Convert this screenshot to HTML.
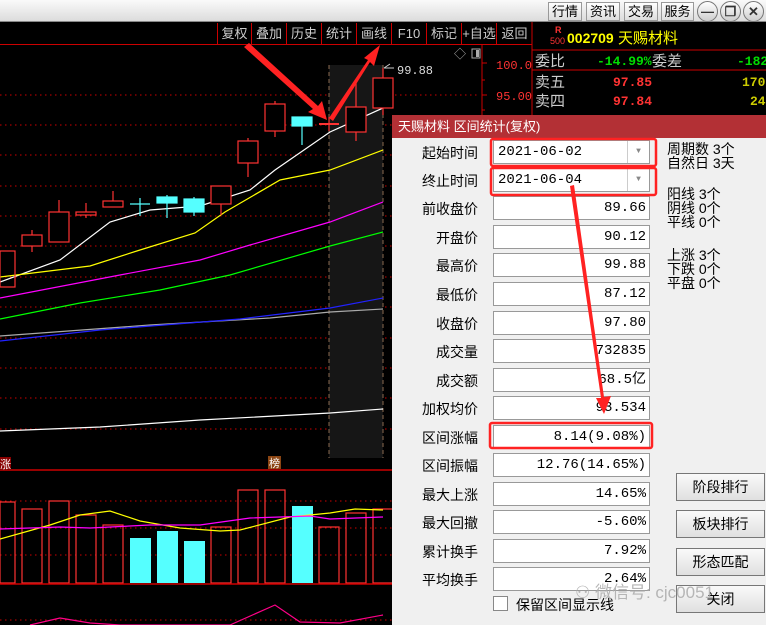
<!DOCTYPE html>
<html><head><meta charset="utf-8"><style>
*{margin:0;padding:0;box-sizing:border-box}
body{width:766px;height:625px;overflow:hidden;background:#000;position:relative;font-family:"Liberation Sans","Noto Sans CJK SC",sans-serif}
.abs{position:absolute}
.top{left:0;top:0;width:766px;height:22px;background:linear-gradient(#fafafa,#dcdcdc);border-bottom:1px solid #888}
.tb{top:2px;height:19px;border:1px solid #999;background:linear-gradient(#fff,#ddd);font-size:13px;color:#000;text-align:center;line-height:17px}
.circ{top:1px;width:21px;height:21px;border-radius:50%;border:1px solid #777;background:linear-gradient(#fff,#ccc);font-size:13px;line-height:19px;text-align:center;color:#333;font-weight:bold}
.tool{top:23px;height:21px;font-size:13px;color:#ccc;line-height:21px;text-align:center;border-left:1px solid #c00}
.dlg{left:392px;top:115px;width:374px;height:510px;background:#f0f0f0}
.dt{left:0;top:0;width:374px;height:23px;background:#b33035;color:#fff;font-size:13px;line-height:23px;padding-left:6px}
.lb{font-size:14px;color:#000;text-align:right;width:86px;left:0}
.in{left:101px;width:157px;height:24px;background:#fff;border:1px solid #999;font-family:"Liberation Mono","Noto Sans CJK SC",monospace;font-size:14px;text-align:right;padding-right:3px;line-height:22px;color:#000}
.btn{left:284px;width:89px;height:28px;border:1px solid #777;background:linear-gradient(#fafafa,#e0e0e0);font-size:14px;text-align:center;line-height:26px}
.side{font-size:14px;color:#000;line-height:14px}
</style></head><body>
<div class="abs top"></div>
<div class="abs tb" style="left:548px;width:34px">行情</div>
<div class="abs tb" style="left:586px;width:34px">资讯</div>
<div class="abs tb" style="left:624px;width:34px">交易</div>
<div class="abs tb" style="left:661px;width:33px">服务</div>
<div class="abs circ" style="left:697px">—</div>
<div class="abs circ" style="left:720px">❐</div>
<div class="abs circ" style="left:743px">✕</div>

<div class="abs" style="left:0;top:44px;width:532px;height:1px;background:#c00"></div>
<div class="abs tool" style="left:217px;width:34px">复权</div>
<div class="abs tool" style="left:251px;width:35px">叠加</div>
<div class="abs tool" style="left:286px;width:35px">历史</div>
<div class="abs tool" style="left:321px;width:35px">统计</div>
<div class="abs tool" style="left:356px;width:35px">画线</div>
<div class="abs tool" style="left:391px;width:35px">F10</div>
<div class="abs tool" style="left:426px;width:35px">标记</div>
<div class="abs tool" style="left:461px;width:35px">+自选</div>
<div class="abs tool" style="left:496px;width:36px">返回</div>

<svg class="abs" style="left:0;top:0" width="766" height="625">
<g stroke="#c00" stroke-dasharray="1.5 3.5" stroke-width="1">
<line x1="0" y1="95" x2="480" y2="95"/><line x1="0" y1="125" x2="480" y2="125"/><line x1="0" y1="155" x2="480" y2="155"/><line x1="0" y1="186" x2="480" y2="186"/><line x1="0" y1="216" x2="480" y2="216"/><line x1="0" y1="246" x2="480" y2="246"/><line x1="0" y1="277" x2="480" y2="277"/><line x1="0" y1="307" x2="480" y2="307"/><line x1="0" y1="338" x2="480" y2="338"/><line x1="0" y1="368" x2="480" y2="368"/><line x1="0" y1="398" x2="480" y2="398"/><line x1="0" y1="429" x2="480" y2="429"/>
<line x1="0" y1="501" x2="480" y2="501"/><line x1="0" y1="528" x2="480" y2="528"/><line x1="0" y1="555" x2="480" y2="555"/><line x1="0" y1="620" x2="480" y2="620"/>
</g>
<rect x="329" y="65" width="54" height="393" fill="#161616"/>
<line x1="329" y1="65" x2="329" y2="458" stroke="#8a6a50" stroke-dasharray="4 3"/>
<line x1="383" y1="65" x2="383" y2="458" stroke="#8a6a50" stroke-dasharray="4 3"/>
<g fill="none" stroke-width="1.2">
<polyline stroke="#fff" points="0,282 60,260 110,222 150,210 200,206 250,190 275,170 330,132 383,108"/>
<polyline stroke="#ff0" points="0,277 90,266 140,250 195,233 225,212 280,180 330,170 383,150"/>
<polyline stroke="#f0f" points="0,298 120,275 200,260 250,245 330,222 383,202"/>
<polyline stroke="#0f0" points="0,319 80,303 160,290 230,275 330,246 383,232"/>
<polyline stroke="#aaa" points="0,336 150,325 270,318 330,312 383,309"/>
<polyline stroke="#22f" points="0,341 100,330 240,319 330,308 383,298"/>
<polyline stroke="#fff" points="0,431 100,427 200,420 330,413 383,409"/>
</g>
<g stroke="#f33" fill="none" stroke-width="1.2">
<rect x="0" y="251" width="15" height="36"/>
<line x1="32" y1="230" x2="32" y2="252"/><rect x="22" y="235" width="20" height="11" fill="#000"/>
<line x1="59" y1="200" x2="59" y2="242"/><rect x="49" y="212" width="20" height="30" fill="#000"/>
<line x1="86" y1="203" x2="86" y2="218"/><rect x="76" y="212" width="20" height="3" fill="#000"/>
<line x1="113" y1="191" x2="113" y2="207"/><rect x="103" y="201" width="20" height="6" fill="#000"/>
<line x1="221" y1="186" x2="221" y2="215"/><rect x="211" y="186" width="20" height="18" fill="#000"/>
<line x1="248" y1="138" x2="248" y2="177"/><rect x="238" y="141" width="20" height="22" fill="#000"/>
<line x1="275" y1="101" x2="275" y2="137"/><rect x="265" y="104" width="20" height="27" fill="#000"/>
<line x1="329" y1="117" x2="329" y2="131"/><line x1="319" y1="124" x2="339" y2="124" stroke-width="2"/>
<line x1="356" y1="82" x2="356" y2="141"/><rect x="346" y="107" width="20" height="25" fill="#000"/>
<line x1="383" y1="68" x2="383" y2="115"/><rect x="373" y="78" width="20" height="30" fill="#000"/>
</g>
<g stroke="#5ff" fill="#5ff" stroke-width="1.2">
<line x1="140" y1="198" x2="140" y2="216"/><line x1="130" y1="204" x2="150" y2="204"/>
<line x1="167" y1="195" x2="167" y2="218"/><rect x="157" y="197" width="20" height="6"/>
<line x1="194" y1="197" x2="194" y2="216"/><rect x="184" y="199" width="20" height="13"/>
<line x1="302" y1="126" x2="302" y2="145"/><rect x="292" y="117" width="20" height="9"/>
</g>
<text x="397" y="74" fill="#ddd" font-size="12" font-family="Liberation Mono">99.88</text>
<path d="M384 68 l6 -4 M384 68 h10" stroke="#ccc"/>
<text x="454" y="58" fill="#aaa" font-size="12">◇</text>
<rect x="472" y="49" width="8" height="9" fill="none" stroke="#aaa"/><rect x="476" y="50" width="3" height="7" fill="#aaa"/>
<line x1="482" y1="45" x2="482" y2="625" stroke="#c00"/>
<g stroke="#c00"><line x1="482" y1="63" x2="487" y2="63"/><line x1="482" y1="80" x2="485" y2="80"/><line x1="482" y1="95" x2="487" y2="95"/><line x1="482" y1="110" x2="485" y2="110"/></g>
<text x="496" y="69" fill="#f33" font-size="12" font-family="Liberation Mono">100.0</text>
<text x="496" y="100" fill="#f33" font-size="12" font-family="Liberation Mono">95.00</text>
<line x1="0" y1="470" x2="482" y2="470" stroke="#c00" stroke-width="1.5"/>
<rect x="0" y="457" width="11" height="13" fill="#800"/><text x="0" y="468" fill="#fff" font-size="11">涨</text>
<rect x="268" y="456" width="13" height="13" fill="#8b4513"/><text x="269" y="467" fill="#fff" font-size="11">榜</text>
<g stroke="#f33" fill="none" stroke-width="1.2">
<rect x="0" y="502" width="15" height="81"/><rect x="22" y="509" width="20" height="74"/><rect x="49" y="501" width="20" height="82"/><rect x="76" y="515" width="20" height="68"/><rect x="103" y="525" width="20" height="58"/><rect x="211" y="527" width="20" height="56"/><rect x="238" y="490" width="20" height="93"/><rect x="265" y="490" width="20" height="93"/><rect x="319" y="527" width="20" height="56"/><rect x="346" y="513" width="20" height="70"/><rect x="373" y="509" width="20" height="74"/>
</g>
<g fill="#5ff"><rect x="130" y="538" width="21" height="45"/><rect x="157" y="531" width="21" height="52"/><rect x="184" y="541" width="21" height="42"/><rect x="292" y="506" width="21" height="77"/></g>
<polyline fill="none" stroke="#ff0" stroke-width="1.2" points="0,539 50,525 80,515 110,511 140,521 180,528 220,531 240,530 290,517 330,513 355,509 383,510"/>
<polyline fill="none" stroke="#f0f" stroke-width="1.2" points="0,529 60,527 90,528 150,525 200,525 250,518 310,516 330,519 383,517"/>
<line x1="0" y1="584" x2="482" y2="584" stroke="#c00" stroke-width="1.5"/>
<polyline fill="none" stroke="#f08" stroke-width="1.2" points="30,625 60,618 90,623 120,625 230,625 275,605 300,622 340,623 383,615"/>
<line x1="532" y1="22" x2="532" y2="625" stroke="#c00"/>
<line x1="532" y1="50" x2="766" y2="50" stroke="#c00"/><line x1="532" y1="70" x2="766" y2="70" stroke="#c00"/>
<text x="555" y="33" fill="#f33" font-size="9" font-weight="bold">R</text><text x="550" y="44" fill="#f33" font-size="9">500</text>
<text x="567" y="43" fill="#ff0" font-size="14" font-weight="bold">002709</text>
<text x="618" y="43" fill="#ff0" font-size="15">天赐材料</text>
<text x="535" y="66" fill="#ccc" font-size="15">委比</text>
<text x="597" y="65" fill="#0d0" font-size="13" font-weight="bold" font-family="Liberation Mono">-14.99%</text>
<text x="652" y="66" fill="#ccc" font-size="15">委差</text>
<text x="737" y="65" fill="#0d0" font-size="13" font-weight="bold" font-family="Liberation Mono">-182</text>
<text x="535" y="87" fill="#ccc" font-size="15">卖五</text><text x="613" y="86" fill="#f33" font-size="13" font-weight="bold" font-family="Liberation Mono">97.85</text><text x="742" y="86" fill="#cc0" font-size="13" font-weight="bold" font-family="Liberation Mono">170</text>
<text x="535" y="106" fill="#ccc" font-size="15">卖四</text><text x="613" y="105" fill="#f33" font-size="13" font-weight="bold" font-family="Liberation Mono">97.84</text><text x="750" y="105" fill="#cc0" font-size="13" font-weight="bold" font-family="Liberation Mono">24</text>
</svg>

<div class="abs dlg">
<div class="abs dt">天赐材料 区间统计(复权)</div>
<div class="abs lb" style="top:28px">起始时间</div>
<div class="abs in" style="top:25px;text-align:left;padding-left:4px">2021-06-02<span style="position:absolute;right:0;top:0;width:22px;height:22px;border-left:1px solid #ccc;font-size:8px;color:#888;text-align:center">▼</span></div>
<div class="abs lb" style="top:56px">终止时间</div>
<div class="abs in" style="top:53px;text-align:left;padding-left:4px">2021-06-04<span style="position:absolute;right:0;top:0;width:22px;height:22px;border-left:1px solid #ccc;font-size:8px;color:#888;text-align:center">▼</span></div>
<div class="abs lb" style="top:84px">前收盘价</div><div class="abs in" style="top:81px">89.66</div>
<div class="abs lb" style="top:113px">开盘价</div><div class="abs in" style="top:110px">90.12</div>
<div class="abs lb" style="top:141px">最高价</div><div class="abs in" style="top:138px">99.88</div>
<div class="abs lb" style="top:170px">最低价</div><div class="abs in" style="top:167px">87.12</div>
<div class="abs lb" style="top:199px">收盘价</div><div class="abs in" style="top:196px">97.80</div>
<div class="abs lb" style="top:227px">成交量</div><div class="abs in" style="top:224px">732835</div>
<div class="abs lb" style="top:256px">成交额</div><div class="abs in" style="top:253px">68.5亿</div>
<div class="abs lb" style="top:284px">加权均价</div><div class="abs in" style="top:281px">93.534</div>
<div class="abs lb" style="top:313px">区间涨幅</div><div class="abs in" style="top:310px">8.14(9.08%)</div>
<div class="abs lb" style="top:341px">区间振幅</div><div class="abs in" style="top:338px">12.76(14.65%)</div>
<div class="abs lb" style="top:370px">最大上涨</div><div class="abs in" style="top:367px">14.65%</div>
<div class="abs lb" style="top:398px">最大回撤</div><div class="abs in" style="top:395px">-5.60%</div>
<div class="abs lb" style="top:427px">累计换手</div><div class="abs in" style="top:424px">7.92%</div>
<div class="abs lb" style="top:455px">平均换手</div><div class="abs in" style="top:452px">2.64%</div>
<div class="abs" style="left:101px;top:481px;width:15px;height:15px;background:#fff;border:1px solid #888"></div>
<div class="abs" style="left:124px;top:480px;font-size:14px">保留区间显示线</div>
<div class="abs side" style="left:275px;top:27px">周期数 3个<br>自然日 3天</div>
<div class="abs side" style="left:275px;top:72px">阳线 3个<br>阴线 0个<br>平线 0个</div>
<div class="abs side" style="left:275px;top:133px">上涨 3个<br>下跌 0个<br>平盘 0个</div>
<div class="abs btn" style="top:358px">阶段排行</div>
<div class="abs btn" style="top:395px">板块排行</div>
<div class="abs btn" style="top:433px">形态匹配</div>
<div class="abs btn" style="top:470px">关闭</div>
<div class="abs" style="left:183px;top:463px;font-size:17px;color:rgba(170,170,170,0.85)">⚇ 微信号: cjc0051</div>
</div>

<svg class="abs" style="left:0;top:0" width="766" height="625">
<g fill="none" stroke="#f22" stroke-width="2.5">
<rect x="491" y="139" width="165" height="27" rx="2"/>
<rect x="491" y="168" width="165" height="27" rx="2"/>
<rect x="490" y="423" width="162" height="25" rx="2"/>
</g>
<g fill="#f22">
<polygon points="244,47 249,43 318,106 322,101 327,120 308,112 313,109"/>
<polygon points="329,118 333,121 370,62 374,66 380,45 364,58 368,60"/>
<polygon points="570,186 574,185 604,397 611,396 604,414 596,398 601,398"/>
</g>
</svg>
</body></html>
